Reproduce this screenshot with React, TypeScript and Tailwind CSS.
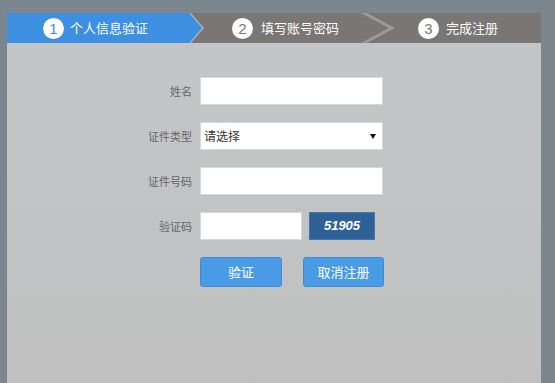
import React from 'react';

const font = { fontFamily: '"Noto Sans CJK SC", "Noto Sans", sans-serif' };

function StepCircle({ n, color }: { n: number; color: string }) {
  return (
    <span
      className={`flex h-[21px] w-[21px] items-center justify-center rounded-full bg-white text-[15px] leading-none ${color}`}
      style={{ fontFamily: '"Liberation Sans", Arial, sans-serif' }}
    >
      {n}
    </span>
  );
}

export default function App() {
  return (
    <div className="h-[383px] w-[555px] overflow-hidden bg-[#7b868f] pl-[7px] pt-[13px]" style={font}>
      <div className="flex h-[370px] w-[534px] flex-col bg-[#c4c4c4]">
        {/* step bar */}
        <div className="flex h-[30px] shrink-0 bg-[#7a7674] text-[13px] text-white">
          <div className="flex w-[176px] items-center gap-[6px] bg-[#3d8fe1] pl-[36px]">
            <StepCircle n={1} color="text-[#3d8fe1]" />
            <span>个人信息验证</span>
          </div>
          <svg width="22" height="30" viewBox="0 0 22 30" className="shrink-0">
            <polygon points="0,0 7,0 20,15 7,30 0,30" fill="#3d8fe1" />
            <polyline points="7,0 20,15 7,30" fill="none" stroke="#a9aeb3" strokeWidth="1.5" />
          </svg>
          <div className="flex w-[157px] items-center gap-[8px] pl-[27px]">
            <StepCircle n={2} color="text-[#7a7674]" />
            <span>填写账号密码</span>
          </div>
          <svg width="34" height="30" viewBox="0 0 34 30" className="shrink-0">
            <polyline points="0,0 28,15 0,30" fill="none" stroke="#9d9b9a" strokeWidth="1.3" />
            <polyline points="3,0 31,15 3,30" fill="none" stroke="#a8a6a5" strokeWidth="1.3" />
          </svg>
          <div className="flex flex-1 items-center gap-[7px] pl-[22px]">
            <StepCircle n={3} color="text-[#7a7674]" />
            <span>完成注册</span>
          </div>
        </div>

        {/* form */}
        <div className="flex flex-1 flex-col gap-[17px] bg-gradient-to-b from-[#c3c6c8] to-[#c0c0c0] pt-[34px] text-[11px] text-[#666]">
          <div className="flex items-center">
            <span className="w-[185px] text-right">姓名</span>
            <div className="ml-[8px] h-[28px] w-[183px] border border-[#d8d8d8] bg-white" />
          </div>
          <div className="flex items-center">
            <span className="w-[185px] text-right">证件类型</span>
            <div className="ml-[8px] flex h-[28px] w-[183px] items-center justify-between border border-[#d8d8d8] bg-white pl-[3px] pr-[6px] text-[12px] text-[#333]">
              <span>请选择</span>
              <svg width="6" height="5" viewBox="0 0 6 5">
                <polygon points="0,0 6,0 3,5" fill="#111" />
              </svg>
            </div>
          </div>
          <div className="flex items-center">
            <span className="w-[185px] text-right">证件号码</span>
            <div className="ml-[8px] h-[28px] w-[183px] border border-[#d8d8d8] bg-white" />
          </div>
          <div className="flex items-center">
            <span className="w-[185px] text-right">验证码</span>
            <div className="ml-[8px] h-[28px] w-[102px] border border-[#d8d8d8] bg-white" />
            <div
              className="ml-[7px] flex h-[28px] w-[66px] items-center justify-center border border-[#4a76a6] bg-[#2d6197] text-[13px] font-bold italic text-white"
              style={{ fontFamily: '"Liberation Sans", Arial, sans-serif' }}
            >
              51905
            </div>
          </div>
          <div className="flex items-center">
            <div className="ml-[193px] flex gap-[21px]">
              <button className="h-[30px] w-[82px] rounded-[3px] border border-[#3f8bd4] bg-[#4a9be6] text-[13px] text-white">
                验证
              </button>
              <button className="h-[30px] w-[81px] rounded-[3px] border border-[#3f8bd4] bg-[#4a9be6] text-[13px] text-white">
                取消注册
              </button>
            </div>
          </div>
        </div>
      </div>
    </div>
  );
}
